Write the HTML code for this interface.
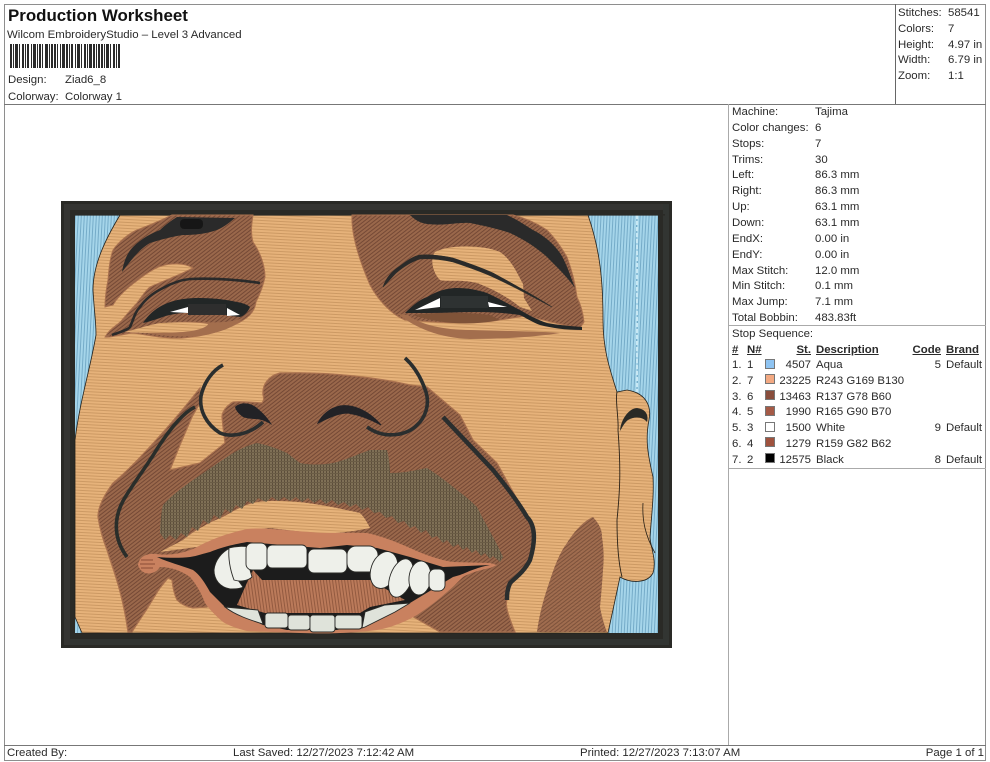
<!DOCTYPE html>
<html><head><meta charset="utf-8"><style>
html,body{margin:0;padding:0;background:#fff}
#p{position:relative;width:990px;height:762px;overflow:hidden;background:#fff;font-family:"Liberation Sans",Arial,sans-serif;font-size:11.4px;color:#2a2a2a}
#p div.t{position:absolute;white-space:nowrap;line-height:14px}
.l{position:absolute;background:#8e8e8e}
.s{position:absolute;width:10px;height:10px;left:765px;box-sizing:border-box;border:1px solid #777}
b.u,.u{text-decoration:underline;font-weight:bold}
svg{position:absolute;left:0;top:0}
</style></head><body><div id="p">
<svg width="990" height="762" viewBox="0 0 990 762" xmlns="http://www.w3.org/2000/svg">
<defs>
<pattern id="sk" patternUnits="userSpaceOnUse" width="12" height="3" patternTransform="rotate(3)"><rect width="12" height="3" fill="#e6b27a"/><rect y="2" width="12" height="1" fill="#cc9963"/></pattern>
<pattern id="br" patternUnits="userSpaceOnUse" width="3" height="3" patternTransform="rotate(-38)"><rect width="3" height="3" fill="#9a674c"/><rect y="2" width="3" height="1" fill="#744a36"/></pattern>
<pattern id="aq" patternUnits="userSpaceOnUse" width="3" height="8" patternTransform="rotate(3)"><rect width="3" height="8" fill="#a5d5ea"/><rect x="2" width="1" height="8" fill="#74abc8"/></pattern>
<pattern id="mu" patternUnits="userSpaceOnUse" width="3" height="3"><rect width="3" height="3" fill="#7f6f56"/><rect x="2" width="1" height="3" fill="#5c4e3a"/><rect y="2" width="3" height="1" fill="#6a5b45"/></pattern>
<pattern id="tg" patternUnits="userSpaceOnUse" width="3" height="3" patternTransform="rotate(-8)"><rect width="3" height="3" fill="#bb7a5a"/><rect x="2" width="1" height="3" fill="#935a40"/></pattern>
<filter id="bl" filterUnits="userSpaceOnUse" x="0" y="0" width="990" height="762"><feGaussianBlur stdDeviation="0.35"/></filter>
</defs>
<!-- barcode -->
<g filter="url(#bl)"><line x1="10" y1="56" x2="121" y2="56" stroke="#2a2a2a" stroke-width="24" stroke-dasharray="2 1 1 1 3 1 1 2 2 1 1 1 2 2 1 1 3 1 1 1 2 1 1 2 3 1 1 1 2 1 2 1 1 2 1 1 3 1 2 1 1 1 2 2 1 1 3 1 1 2 2 1 1 1 3 1 2 1 1 1 2 1"/></g>
<g filter="url(#bl)">
<rect x="61" y="201" width="611" height="447" fill="#2a2b28"/>
<rect x="64" y="204" width="605" height="6" fill="#343532"/>
<rect x="64" y="639" width="605" height="6" fill="#333431"/>
<rect x="64" y="204" width="6" height="441" fill="#343532"/>
<rect x="663" y="204" width="6" height="441" fill="#333431"/>
<rect x="75" y="215" width="583" height="418" fill="url(#aq)"/>
<path d="M637,215V392" stroke="#c8e8f4" stroke-width="2" stroke-dasharray="4 2" fill="none"/>
<!-- face -->
<path d="M120,215 C105,240 93,265 93,290 C94,310 96,320 96,335 C90,370 80,400 75,440 L75,617 L82,633 L608,633 L620,577 C630,583 647,584 653,573 C657,560 650,545 650,537 C652,510 654,495 653,477 C648,455 645,440 649,420 C652,405 645,393 627,390 L617,392 C610,370 603,350 603,320 C603,280 600,250 588,215 Z" fill="url(#sk)" stroke="#24211d" stroke-width="0.8"/>
<rect x="75" y="214" width="590" height="1.6" fill="#2a2b28"/>
<!-- ear lines -->
<path d="M617,392 C615,400 619,420 618,430 C621,470 620,490 617,520 C617,545 619,565 622,577" fill="none" stroke="#2a2018" stroke-width="0.9"/>
<path d="M643,503 C642,520 645,535 655,553" fill="none" stroke="#2a2018" stroke-width="0.8"/>
<path d="M620,431 C621,418 630,408 637,408 C645,409 649,414 647,422 C643,417 635,416 628,420 C624,423 622,428 620,431Z" fill="#2a2b28"/>
<!-- left brow area -->
<path d="M172,215 L253,215 C251,228 251,235 253,242 C260,252 265,265 265,277 C263,287 259,296 256,302 C255,310 251,316 240,322 C225,330 205,336 183,338 C165,339 148,335 133,333 C122,334 112,338 105,337 C110,328 118,325 122,320 C128,313 133,307 137,303 C142,296 146,290 150,287 C165,280 180,275 193,268 C188,265 180,263 173,264 C160,264 148,272 138,280 C127,288 118,296 113,305 L105,307 C105,295 107,285 108,280 C109,268 110,258 113,250 C120,240 130,233 137,230 C150,225 162,220 172,215Z" fill="url(#br)" stroke="#a9714f" stroke-width="1"/>
<path d="M130,330 C150,326 175,320 200,322 C222,323 232,322 242,318 C236,326 225,331 205,335 C175,339 150,334 130,330Z" fill="#a36e4e"/>
<path d="M124,332 C135,330 148,325 160,323 C180,322 198,322 208,324 C207,328 195,331 183,332 C165,333 140,333 124,332Z" fill="url(#sk)"/>
<!-- left brow -->
<path d="M122,272 C124,260 128,252 133,247 C142,238 152,233 160,230 C165,225 172,220 177,217 L235,218 C228,224 222,228 217,230 C205,234 195,235 183,235 C170,237 160,240 150,243 C138,250 130,262 122,272Z" fill="#2b2c29"/>
<rect x="180" y="219" width="23" height="10" rx="4" fill="#191918"/>
<!-- left eye -->
<path d="M143,323 C148,315 155,309 163,305 C175,299 188,298 200,298 C215,298 228,300 237,302 C243,303 248,305 250,307 C248,312 244,316 240,317 C230,316 220,314 210,313 C200,313 190,313 183,313 C172,314 165,316 160,318 C154,320 148,322 143,323Z" fill="#242528"/>
<path d="M170,312 L188,307 L188,313Z M227,308 L240,315 L227,316Z" fill="#fff"/>
<path d="M188,304 h38 v11 h-38z" fill="#2e2f2f"/>
<path d="M112,335 C120,332 128,330 130,327 C134,318 135,312 140,307 C146,298 155,292 163,288 C172,283 180,280 190,279 C215,278 240,280 260,283" fill="none" stroke="#2b2c29" stroke-width="2.6"/>
<!-- right brow area -->
<path d="M352,215 C351,235 360,262 370,285 C378,300 392,315 405,320 C430,322 470,325 500,320 L525,316 C545,320 565,326 580,328 L584,322 C583,312 580,303 577,297 C575,280 570,265 567,257 C560,245 553,236 547,230 C535,222 525,218 513,215Z" fill="url(#br)" stroke="#a9714f" stroke-width="1"/>
<path d="M435,252 C450,244 485,245 500,252 C512,260 518,275 523,284 L524,298 L532,311 L520,307 C505,295 490,288 477,283 C460,279 445,282 440,280 C432,272 430,258 435,252Z" fill="url(#sk)"/>
<path d="M398,314 C415,328 440,338 470,339 C500,339 535,337 560,333 C530,331 500,331 470,330 C445,330 420,325 408,315Z" fill="#a36e4e"/>
<path d="M413,315 C440,324 470,326 500,320 L490,315 C465,312 435,312 413,315Z" fill="#7f5239"/>
<!-- right brow -->
<path d="M410,215 C415,220 420,223 427,224 C445,226 458,222 470,223 C485,226 498,229 510,233 C525,240 537,248 547,257 C558,268 568,278 575,288 C570,275 566,262 560,253 C553,243 543,235 533,230 C525,225 516,219 507,215Z" fill="#2b2c29"/>
<!-- right eye -->
<path d="M405,313 C412,306 419,300 427,297 C437,291 447,288 457,288 C468,288 478,290 487,293 C498,298 510,305 520,310 C530,316 538,320 547,323 C558,325 570,326 582,327 L582,330 C565,330 552,328 540,325 C532,322 526,318 520,315 C505,313 492,312 477,312 C460,312 444,313 427,313Z" fill="#242528"/>
<path d="M415,310 L440,298 L440,307Z M488,302 L507,307 L489,307Z" fill="#fff"/>
<rect x="441" y="296" width="47" height="12" fill="#2f3030"/>
<path d="M383,287 C386,278 392,271 400,266 C408,260 414,256 420,255 C432,254 444,256 453,258 C468,263 482,268 493,273 C515,285 535,296 552,307 C535,298 515,287 493,277 C480,271 465,266 453,262 C440,259 430,258 420,259 C410,262 402,268 396,273 C391,278 387,283 383,287Z" fill="#2b2c29" stroke="#2b2c29" stroke-width="0.6"/>
<!-- muzzle -->
<path d="M200,388 C175,420 135,465 113,483 C103,497 98,507 98,517 C100,530 103,540 107,550 C113,570 122,590 128,632 L132,632 C136,625 140,620 143,615 C150,605 155,595 160,588 L168,578 L172,580 C173,590 175,596 177,600 C182,605 187,607 193,608 L207,607 L250,560 L410,615 L440,632 L515,632 C508,615 505,605 507,600 C505,590 518,575 530,560 C538,540 535,525 527,517 L497,463 L473,440 L460,415 L427,387 L410,385 C380,378 330,372 290,373 L280,373 C268,376 262,385 263,395 C264,398 264,400 262,403 C250,402 240,401 233,402 C226,406 222,412 222,417 L223,427 L225,443 L200,463 L170,470 L180,445 L192,417 L200,403Z" fill="url(#br)" stroke="#a9714f" stroke-width="1.2"/>
<!-- cheek patch -->
<path d="M537,632 C540,610 545,595 550,580 C555,565 560,552 567,543 C575,530 585,520 593,517 C600,525 602,530 602,537 C604,550 604,560 603,570 C602,585 601,597 600,607 C602,618 605,627 607,632Z" fill="url(#br)" opacity="0.92"/>
<!-- upper lip skin -->
<path d="M183,540 C195,530 210,522 223,517 C235,510 246,504 257,502 C290,498 325,505 360,513 C365,518 368,524 370,528 C360,530 345,533 320,534 L270,528 C240,530 215,540 197,547 L160,552Z" fill="url(#sk)"/>
<!-- nasolabial lines -->
<path d="M195,407 C182,413 168,432 157,449 C147,466 132,485 123,501 C114,518 113,538 127,557" fill="none" stroke="#2b2d2c" stroke-width="3.6"/>
<path d="M443,417 C460,435 477,453 493,470 C505,485 517,500 527,517 C535,525 536,540 530,560 C524,572 515,578 510,583 C507,590 507,595 507,600" fill="none" stroke="#2b2d2f" stroke-width="4.4"/>
<!-- nose -->
<path d="M223,365 C213,370 204,382 201,396 C199,410 206,424 220,433 C232,438 250,434 263,422" fill="none" stroke="#2b2d2f" stroke-width="3.6"/>
<path d="M405,358 C415,367 422,380 426,392 C430,405 425,418 417,425 C408,435 385,440 367,427" fill="none" stroke="#2b2d2f" stroke-width="3.6"/>
<path d="M235,407 C240,402 250,402 257,408 C262,412 268,418 272,425 C266,421 262,420 257,419 C250,419 245,418 243,417 C239,414 236,411 235,407Z" fill="#222428"/>
<path d="M318,423 C322,415 330,408 340,406 C352,404 368,410 381,425 C372,420 360,415 348,413 C338,413 328,418 318,423Z" fill="#222428" stroke="#222428" stroke-width="1"/>
<!-- moustache -->
<path d="M160,533 C160,525 161,512 163,505 C172,495 183,487 193,480 C205,472 216,464 227,457 C237,450 248,445 257,443 C268,445 278,449 287,453 C291,456 296,460 300,463 C310,465 322,465 333,463 C346,460 358,454 370,450 L387,450 C389,458 390,466 390,473 C405,473 416,470 427,468 C437,474 447,482 457,490 C465,496 471,501 477,507 C485,523 497,543 503,557 L500,562 L493,556 L490,559 L485,553 L481,556 L476,550 L472,553 L467,547 L463,550 L458,544 L453,547 L447,540 L443,543 L437,536 L432,538 L426,530 L421,533 L415,526 L410,528 L404,521 L398,523 L392,516 L386,518 L380,512 L374,513 L368,507 L362,510 L356,504 L350,507 L344,502 L338,505 L332,500 L326,504 L320,499 L314,503 L308,498 L302,502 L296,497 L290,501 L284,497 L278,501 L272,497 L266,502 L258,498 L253,504 L247,501 L242,509 L236,505 L231,513 L225,509 L220,519 L214,515 L209,524 L203,520 L198,531 L192,527 L187,537 L181,533 L176,540 L170,535 L165,540Z" fill="url(#mu)"/>
<!-- lips -->
<path d="M138,565 C139,557 146,553 156,554 C170,556 185,553 197,547 C210,540 225,534 247,529 C265,527 290,531 310,532 C330,534 350,532 367,533 C385,537 398,543 410,548 C425,555 440,560 453,562 L490,563 L497,565 L490,568 C480,570 470,573 463,577 C445,595 432,605 417,615 C405,622 390,628 377,630 C355,633 330,634 300,633 L247,631 C235,628 228,625 223,622 C215,615 210,610 205,603 C200,590 195,583 190,577 C180,570 170,567 160,567 C155,575 142,577 138,565Z" fill="#c9815f"/>
<path d="M141,560 h12 M140,564 h15 M141,568 h12" stroke="#99593f" stroke-width="1.3"/>
<!-- mouth -->
<path d="M157,557 C170,558 180,558 190,557 C197,556 205,553 210,552 C220,548 230,545 247,542 L320,548 L347,545 L377,548 L410,557 L443,567 L490,565 C475,568 468,572 460,575 L453,577 L410,603 L370,622 L337,630 L287,630 L263,625 L225,607 L210,592 C205,583 200,575 193,570 C180,565 170,563 157,557Z" fill="#1f1f1d"/>
<!-- tongue -->
<path d="M253,570 L262,580 L310,580 L370,580 L405,600 L370,607 L360,613 L265,613 L237,605 C243,592 248,580 253,570Z" fill="url(#tg)"/>
<!-- upper teeth -->
<g fill="#eef0ea" stroke="#2a2a28" stroke-width="0.9">
<path d="M230,548 C222,552 215,560 214,570 C214,580 220,587 230,589 C235,589 240,589 243,587 L238,580 L230,560Z"/>
<path d="M229,548 C236,546 244,546 249,547 L250,570 L252,577 C248,581 240,582 234,580 C231,572 228,560 229,548Z"/>
<rect x="246" y="543" width="21" height="27" rx="6"/>
<rect x="267" y="545" width="40" height="23" rx="5"/>
<rect x="308" y="549" width="39" height="24" rx="6"/>
<rect x="347" y="546" width="31" height="26" rx="9"/>
<ellipse cx="384" cy="570" rx="13" ry="19" transform="rotate(20 384 570)"/>
<ellipse cx="401" cy="578" rx="11" ry="20" transform="rotate(20 401 578)"/>
<ellipse cx="420" cy="578" rx="11" ry="17" transform="rotate(6 420 578)"/>
<rect x="429" y="569" width="16" height="22" rx="6"/>
</g>
<!-- lower teeth -->
<g fill="#dfe3da" stroke="#2a2a28" stroke-width="0.9">
<path d="M225,607 L258,610 L263,624 C250,620 235,615 225,607Z"/>
<rect x="265" y="613" width="23" height="15" rx="3"/>
<rect x="288" y="615" width="22" height="15" rx="3"/>
<rect x="310" y="615" width="25" height="17" rx="3"/>
<rect x="335" y="615" width="27" height="14" rx="3"/>
<path d="M362,628 L365,612 L385,605 L410,603 L395,612 L365,627Z"/>
</g>
</g>
</svg>
<!-- frame -->
<div class="l" style="left:4px;top:4px;width:982px;height:1px"></div>
<div class="l" style="left:4px;top:4px;width:1px;height:757px"></div>
<div class="l" style="left:985px;top:4px;width:1px;height:757px"></div>
<div class="l" style="left:4px;top:104px;width:982px;height:1px;background:#777"></div>
<div class="l" style="left:895px;top:4px;width:1px;height:100px;background:#666"></div>
<div class="l" style="left:728px;top:104px;width:1px;height:641px;background:#aaa"></div>
<div class="l" style="left:728px;top:325px;width:258px;height:1px;background:#aaa"></div>
<div class="l" style="left:728px;top:468px;width:258px;height:1px;background:#aaa"></div>
<div class="l" style="left:4px;top:745px;width:982px;height:1px;background:#777"></div>
<div class="l" style="left:4px;top:760px;width:982px;height:1px"></div>
<!-- header -->
<div class="t" style="left:8px;top:6px;font-size:16.9px;font-weight:bold;line-height:19px;color:#111">Production Worksheet</div>
<div class="t" style="left:7px;top:28px;font-size:11.45px">Wilcom EmbroideryStudio – Level 3 Advanced</div>
<div class="t" style="left:8px;top:73px">Design:</div><div class="t" style="left:65px;top:73px">Ziad6_8</div>
<div class="t" style="left:8px;top:90px">Colorway:</div><div class="t" style="left:65px;top:90px">Colorway 1</div>
<!-- stats -->
<div class="t" style="left:898px;top:6px">Stitches:</div><div class="t" style="left:948px;top:6px">58541</div>
<div class="t" style="left:898px;top:22px">Colors:</div><div class="t" style="left:948px;top:22px">7</div>
<div class="t" style="left:898px;top:38px">Height:</div><div class="t" style="left:948px;top:38px">4.97 in</div>
<div class="t" style="left:898px;top:53px">Width:</div><div class="t" style="left:948px;top:53px">6.79 in</div>
<div class="t" style="left:898px;top:69px">Zoom:</div><div class="t" style="left:948px;top:69px">1:1</div>
<!-- machine -->
<div class="t" style="left:732px;top:105px">Machine:</div><div class="t" style="left:815px;top:105px">Tajima</div>
<div class="t" style="left:732px;top:121px">Color changes:</div><div class="t" style="left:815px;top:121px">6</div>
<div class="t" style="left:732px;top:137px">Stops:</div><div class="t" style="left:815px;top:137px">7</div>
<div class="t" style="left:732px;top:153px">Trims:</div><div class="t" style="left:815px;top:153px">30</div>
<div class="t" style="left:732px;top:168px">Left:</div><div class="t" style="left:815px;top:168px">86.3 mm</div>
<div class="t" style="left:732px;top:184px">Right:</div><div class="t" style="left:815px;top:184px">86.3 mm</div>
<div class="t" style="left:732px;top:200px">Up:</div><div class="t" style="left:815px;top:200px">63.1 mm</div>
<div class="t" style="left:732px;top:216px">Down:</div><div class="t" style="left:815px;top:216px">63.1 mm</div>
<div class="t" style="left:732px;top:232px">EndX:</div><div class="t" style="left:815px;top:232px">0.00 in</div>
<div class="t" style="left:732px;top:248px">EndY:</div><div class="t" style="left:815px;top:248px">0.00 in</div>
<div class="t" style="left:732px;top:264px">Max Stitch:</div><div class="t" style="left:815px;top:264px">12.0 mm</div>
<div class="t" style="left:732px;top:279px">Min Stitch:</div><div class="t" style="left:815px;top:279px">0.1 mm</div>
<div class="t" style="left:732px;top:295px">Max Jump:</div><div class="t" style="left:815px;top:295px">7.1 mm</div>
<div class="t" style="left:732px;top:311px">Total Bobbin:</div><div class="t" style="left:815px;top:311px">483.83ft</div>
<div class="t" style="left:732px;top:327px">Stop Sequence:</div>
<!-- table -->
<div class="t u" style="left:732px;top:343px">#</div><div class="t u" style="left:747px;top:343px">N#</div>
<div class="t u" style="right:179px;top:343px">St.</div><div class="t u" style="left:816px;top:343px">Description</div>
<div class="t u" style="right:49px;top:343px">Code</div><div class="t u" style="left:946px;top:343px">Brand</div>

<div class="t" style="left:732px;top:358px">1.</div><div class="t" style="left:747px;top:358px">1</div><div class="s" style="top:359px;background:#8fc4f2"></div><div class="t" style="right:179px;top:358px">4507</div><div class="t" style="left:816px;top:358px">Aqua</div><div class="t" style="right:49px;top:358px">5</div><div class="t" style="left:946px;top:358px">Default</div>
<div class="t" style="left:732px;top:374px">2.</div><div class="t" style="left:747px;top:374px">7</div><div class="s" style="top:374px;background:#f3a982"></div><div class="t" style="right:179px;top:374px">23225</div><div class="t" style="left:816px;top:374px">R243 G169 B130</div>
<div class="t" style="left:732px;top:390px">3.</div><div class="t" style="left:747px;top:390px">6</div><div class="s" style="top:390px;background:#894e3c"></div><div class="t" style="right:179px;top:390px">13463</div><div class="t" style="left:816px;top:390px">R137 G78 B60</div>
<div class="t" style="left:732px;top:405px">4.</div><div class="t" style="left:747px;top:405px">5</div><div class="s" style="top:406px;background:#a55a46"></div><div class="t" style="right:179px;top:405px">1990</div><div class="t" style="left:816px;top:405px">R165 G90 B70</div>
<div class="t" style="left:732px;top:421px">5.</div><div class="t" style="left:747px;top:421px">3</div><div class="s" style="top:422px;background:#fff"></div><div class="t" style="right:179px;top:421px">1500</div><div class="t" style="left:816px;top:421px">White</div><div class="t" style="right:49px;top:421px">9</div><div class="t" style="left:946px;top:421px">Default</div>
<div class="t" style="left:732px;top:437px">6.</div><div class="t" style="left:747px;top:437px">4</div><div class="s" style="top:437px;background:#9f523e"></div><div class="t" style="right:179px;top:437px">1279</div><div class="t" style="left:816px;top:437px">R159 G82 B62</div>
<div class="t" style="left:732px;top:453px">7.</div><div class="t" style="left:747px;top:453px">2</div><div class="s" style="top:453px;background:#000"></div><div class="t" style="right:179px;top:453px">12575</div><div class="t" style="left:816px;top:453px">Black</div><div class="t" style="right:49px;top:453px">8</div><div class="t" style="left:946px;top:453px">Default</div>
<!-- footer -->
<div class="t" style="left:7px;top:746px">Created By:</div>
<div class="t" style="left:233px;top:746px">Last Saved: 12/27/2023 7:12:42 AM</div>
<div class="t" style="left:580px;top:746px">Printed: 12/27/2023 7:13:07 AM</div>
<div class="t" style="right:6px;top:746px">Page 1 of 1</div>
</div></body></html>
